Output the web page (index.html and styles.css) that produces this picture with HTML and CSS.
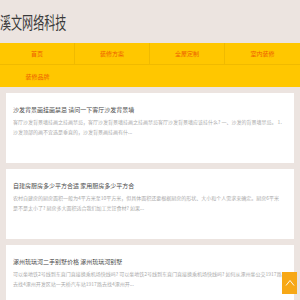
FILE: index.html
```html
<!DOCTYPE html>
<html lang="zh-CN">

<head>
    <meta charset="UTF-8">
    <meta name="viewport" content="width=device-width, initial-scale=1.0">
    <title>溪文网络科技</title>
    <link rel="stylesheet" href="styles.css">
</head>

<body>
    <div class="header">
        <h1 class="logo">溪文网络科技</h1>
    </div>
    <div class="nav">
        <a href="#">首页</a>
        <a href="#">装修方案</a>
        <a href="#">全屋定制</a>
        <a href="#">室内装修</a>
        <a href="#">装修品牌</a>
    </div>
    <div class="list">
        <div class="card">
            <h3>沙发背景画挂画禁忌 请问一下客厅沙发背景墙</h3>
            <p>客厅沙发背景墙挂画之挂画禁忌，客厅沙发背景墙挂画之挂画禁忌客厅沙发背景墙应该挂什么? 一、沙发的背景墙禁忌。 1.沙发顶部的画不宜选是垂直的，沙发背景画挂画有什...</p>
        </div>
        <div class="card">
            <h3>自建房厨房多少平方合适 家用厨房多少平方合</h3>
            <p>农村自建房的厨房面积一般为4平方米至10平方米，但具体面积还要根据厨房的形状、大小和个人需求来确定。厨房6平米是不是太小了? 厨房多大面积适合我们加工烹饪食材? 如果...</p>
        </div>
        <div class="card">
            <h3>涿州琉璃河二手别墅价格 涿州琉璃河别墅</h3>
            <p>可以坐地铁2号线到东直门直接换乘机场快线吗? 可以坐地铁2号线到东直门直接换乘机场快线吗? 如何从涿州坐公交1917路去找4涿州开发区站一天桥汽车站1917路去找4涿州开...</p>
        </div>
    </div>
    <a class="top" href="#">
        <svg width="10" height="8" viewBox="0 0 10 8">
            <polyline points="1,6.5 5,1.5 9,6.5" fill="none" stroke="#fff" stroke-width="0.9" />
        </svg>
    </a>
</body>

</html>
```

FILE: styles.css
```css
body {
    margin: 0;
    background-color: #ece4e0;
    font-family: "Noto Sans CJK SC", "Noto Sans", sans-serif;
}

.header {
    height: 43px;
    display: flex;
    align-items: center;
}

.logo {
    margin: 0;
    font-size: 17px;
    font-weight: normal;
    color: #3a3a3a;
    transform: scaleX(0.65);
    transform-origin: left center;
    white-space: nowrap;
}

.nav {
    display: grid;
    grid-template-columns: repeat(4, 1fr);
    grid-auto-rows: 22px;
    background-color: #ffc700;
}

.nav a {
    display: flex;
    align-items: center;
    justify-content: center;
    font-size: 6px;
    color: #ee6100;
    text-decoration: none;
}

.nav a:nth-child(-n+4) {
    border-bottom: 1px solid #f0ba00;
}

.nav a:nth-child(-n+3) {
    border-right: 1px solid #f0ba00;
}

.list {
    display: flex;
    flex-direction: column;
    gap: 6px;
    padding: 6px;
}

.card {
    background-color: #fff;
    padding: 12px 10px 26px 7px;
}

.card h3 {
    margin: 0 0 2px 0;
    font-size: 6px;
    line-height: 10px;
    font-weight: normal;
    color: #4a4a4a;
}

.card p {
    margin: 0;
    font-size: 5px;
    line-height: 10px;
    color: #aaa;
    display: -webkit-box;
    -webkit-line-clamp: 2;
    -webkit-box-orient: vertical;
    overflow: hidden;
}

.top {
    position: fixed;
    right: 3px;
    bottom: 6px;
    width: 15px;
    height: 22px;
    background-color: #f7a816;
    display: flex;
    align-items: center;
    justify-content: center;
}
```
